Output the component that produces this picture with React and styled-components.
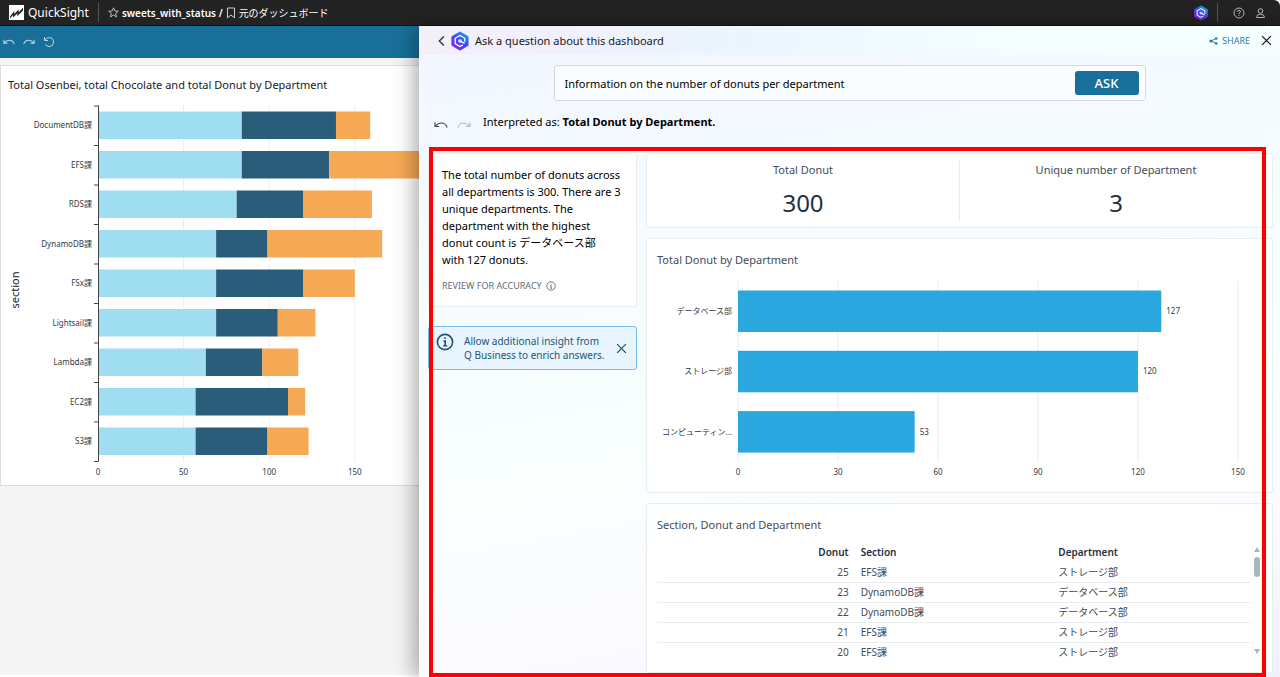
import React from 'react';
import styled, { createGlobalStyle } from 'styled-components';

const GlobalStyle = createGlobalStyle`
  * {
    box-sizing: border-box;
  }

  body {
    margin: 0;
    background: #fff;
    color: #16191f;
    font-family: 'Noto Sans', 'Noto Sans CJK JP', sans-serif;
    font-size: 11px;
  }

  h1, h2, p {
    margin: 0;
    font-size: 11px;
    font-weight: 400;
  }

  button, input {
    font-family: inherit;
  }
`;

const Page = styled.div`
  display: flex;
  flex-direction: column;
  height: 100vh;
`;

/* Top bar */

const TopBar = styled.header`
  display: flex;
  align-items: center;
  flex-shrink: 0;
  height: 26px;
  padding: 0 14px 0 8px;
  background: #232323;
  border-bottom: 1px solid #111;
  border-top-right-radius: 6px;
  color: #fff;
`;

const Brand = styled.a`
  display: flex;
  align-items: center;
  gap: 4px;
  color: #fff;
  font-size: 12px;
  text-decoration: none;
`;

const BarDivider = styled.span`
  width: 1px;
  height: 19px;
  margin: 0 ${({ $gap }) => $gap}px;
  background: #555;
`;

const Crumbs = styled.nav`
  display: flex;
  align-items: center;
  flex: 1;
  gap: 3px;
  font-size: 10px;
`;

const CrumbName = styled.span`
  font-weight: ${({ $bold }) => ($bold ? 600 : 400)};
`;

const IconButton = styled.button`
  display: flex;
  align-items: center;
  justify-content: center;
  flex-shrink: 0;
  padding: 0;
  border: 0;
  background: none;
  color: ${({ $color }) => $color || 'inherit'};
  cursor: pointer;
`;

const TopActions = styled.div`
  display: flex;
  align-items: center;
  gap: 10px;
  padding-left: 7px;
`;

/* Dashboard behind the panel */

const Body = styled.div`
  display: grid;
  grid-template-columns: minmax(0, 419fr) minmax(0, 861fr);
  flex: 1;
  min-height: 0;
`;

const Dashboard = styled.main`
  overflow: hidden;
  margin-bottom: 2px;
  background: #f4f4f4;
`;

const DashboardToolbar = styled.div`
  display: flex;
  align-items: center;
  gap: 8px;
  height: 32px;
  padding: 0 3px;
  background: #18709a;
  color: #b9d8e6;
`;

const Sheet = styled.section`
  width: 640px;
  height: 421px;
  margin-top: 7px;
  padding: 11px 7px;
  border: 1px solid #dedede;
  background: #fff;
`;

const ChartTitle = styled.h2`
  color: ${({ $color }) => $color || '#16191f'};
  line-height: 16px;
`;

const ChartSvg = styled.svg`
  display: block;
  overflow: visible;

  text {
    font-size: 8px;
    fill: #2f3b48;
  }
`;

const AxisTitle = styled.text`
  && {
    font-size: 11px;
    fill: #16191f;
  }
`;

/* Q&A panel */

const Panel = styled.aside`
  position: relative;
  display: flex;
  flex-direction: column;
  min-height: 0;
  background: linear-gradient(170deg, #f2f6ff 0%, #f5fbff 28%, #fafffe 60%, #fbfbff 80%, #f2f1ff 100%);
  box-shadow: -4px 0 20px rgba(0, 0, 0, 0.35);
`;

const PanelHeader = styled.header`
  display: flex;
  align-items: center;
  height: 29px;
  flex-shrink: 0;
  padding: 0 8px 0 18px;
  background: linear-gradient(90deg, #f3eff9 0%, #f3effe 12%, #eaf6ff 38%, #f6ffff 70%);
`;

const PanelBrand = styled.div`
  display: flex;
  align-items: center;
  gap: 4px;
`;

const PanelTitle = styled.h1`
  flex: 1;
  margin-left: 5px;
`;

const ShareButton = styled.button`
  display: flex;
  align-items: center;
  gap: 4px;
  margin-right: 11px;
  padding: 0;
  border: 0;
  background: none;
  color: #2b7aa8;
  font-size: 9px;
  cursor: pointer;
`;

const AskForm = styled.form`
  display: flex;
  align-items: center;
  width: 592px;
  max-width: 90%;
  height: 36px;
  flex-shrink: 0;
  margin: 10px auto 0;
  padding: 0 6px 0 10px;
  border: 1px solid #d5dbdb;
  border-radius: 3px;
  background: #fafdff;
`;

const AskInput = styled.input`
  flex: 1;
  min-width: 0;
  padding: 0;
  border: 0;
  outline: 0;
  background: none;
  color: #000;
  font-size: 11px;
`;

const AskButton = styled.button`
  width: 64px;
  height: 24px;
  padding: 0;
  border: 0;
  border-radius: 3px;
  background: #18709a;
  color: #fff;
  font-size: 13px;
  font-weight: 500;
  cursor: pointer;
`;

const Interpretation = styled.div`
  display: flex;
  align-items: center;
  flex-shrink: 0;
  gap: 12px;
  height: 46px;
  padding: 0 15px 6px;
  color: #000;
`;

const History = styled.div`
  display: flex;
  gap: 9px;
  padding-top: 7px;
`;

const Results = styled.div`
  position: relative;
  display: grid;
  grid-template-columns: 209px minmax(0, 1fr);
  align-items: start;
  gap: 9px;
  flex: 1;
  min-height: 0;
  padding: 6px 7px 3px 9px;
`;

const Highlight = styled.div`
  position: absolute;
  top: 0;
  right: 14px;
  bottom: 0;
  left: 10px;
  border: 4px solid #f00;
  pointer-events: none;
`;

const Column = styled.div`
  display: flex;
  flex-direction: column;
  gap: ${({ $gap }) => $gap}px;
`;

const Card = styled.section`
  border: 1px solid #eaeded;
  border-radius: 3px;
  background: #fff;
`;

const SummaryCard = styled(Card)`
  height: 154px;
  padding: 12px 14px 0 13px;
`;

const SummaryText = styled.p`
  color: #000;
  line-height: 17px;
`;

const Review = styled.div`
  display: flex;
  align-items: center;
  gap: 4px;
  margin-top: 12px;
  color: #5f6b7a;
  font-size: 9px;
  line-height: 12px;
`;

const Notice = styled.div`
  display: flex;
  align-items: center;
  height: 44px;
  padding: 0 9px;
  border: 1px solid #75bdf5;
  border-radius: 3px;
  background: #e9f5fe;
  color: #1f5673;
`;

const NoticeIcon = styled.span`
  display: flex;
  align-self: flex-start;
  margin: 6px 10px 0 -2px;
`;

const NoticeText = styled.p`
  flex: 1;
  font-size: 10px;
  line-height: 14px;
`;

const KpiCard = styled(Card)`
  display: flex;
  height: 75px;
  padding: 6px 0;
`;

const Kpi = styled.div`
  flex: 1;
  text-align: center;

  & + & {
    border-left: 1px solid #eaeded;
  }
`;

const KpiLabel = styled.h2`
  color: #414d5c;
  line-height: 20px;
`;

const KpiValue = styled.p`
  margin-top: 7px;
  color: #232f3e;
  font-size: 24px;
  line-height: 32px;
`;

const ChartCard = styled(Card)`
  height: 255px;
  padding: 13px 10px;
`;

const TableCard = styled(Card)`
  height: 170px;
  padding: 13px 11px 0 10px;
`;

const TableArea = styled.div`
  display: grid;
  grid-template-columns: minmax(0, 1fr) 8px;
  gap: 3px;
  margin-top: 9px;
`;

const Table = styled.table`
  width: 100%;
  border-collapse: collapse;
  table-layout: fixed;
  color: #414d5c;
  font-size: 10px;
  line-height: 16px;

  th, td {
    height: 20px;
    padding: 0 6px;
    text-align: left;
  }

  th {
    color: #232f3e;
    font-weight: 600;
  }

  th:first-child, td:first-child {
    text-align: right;
  }

  td {
    border-bottom: 1px solid #eaeded;
  }

  tr:last-child td {
    border-bottom: 0;
  }
`;

const Scrollbar = styled.div`
  display: flex;
  flex-direction: column;
  align-items: center;
  padding: 5px 0 8px;
  color: #aab7b8;
`;

const ScrollThumb = styled.span`
  width: 6px;
  height: 20px;
  margin: 5px 0 auto;
  border-radius: 3px;
  background: #aab7b8;
`;

/* Icons */

const BrandLogo = () => (
  <svg width="16" height="16" viewBox="0 0 16 16" aria-hidden="true">
    <rect x="1" y="0" width="15" height="15" fill="#fff" />
    <path d="M2 11.4 L6.2 6 V9 L10.6 4.4 V7.4 L15 2.6 V5.6 L9.4 11.2 V8.4 L5 12.6 V10 L2 13.4 Z" fill="#232323" />
  </svg>
);

const StarIcon = () => (
  <svg width="11" height="11" viewBox="0 0 12 12" fill="none" stroke="#ccc" aria-hidden="true">
    <path d="M6 .9 L7.5 4.3 L11.2 4.6 L8.4 7 L9.3 10.8 L6 8.7 L2.7 10.8 L3.6 7 L.8 4.6 L4.5 4.3 Z" />
  </svg>
);

const BookmarkIcon = () => (
  <svg width="10" height="12" viewBox="0 0 10 12" fill="none" stroke="#ccc" aria-hidden="true">
    <path d="M1.5 1 H8.5 V10.8 L5 8 L1.5 10.8 Z" />
  </svg>
);

const QIcon = ({ size, id }) => (
  <svg width={size} height={size} viewBox="0 0 20 20" fill="none" aria-hidden="true">
    <defs>
      <linearGradient id={id} x1="16" y1="2" x2="4" y2="18" gradientUnits="userSpaceOnUse">
        <stop offset="0" stopColor="#12a0ff" />
        <stop offset=".45" stopColor="#3d4cf2" />
        <stop offset="1" stopColor="#8a22e8" />
      </linearGradient>
    </defs>
    <path
      d="M10 .5 L17.9 5 Q18.6 5.4 18.6 6.2 V13.8 Q18.6 14.6 17.9 15 L10.7 19.2 Q10 19.6 9.3 19.2 L2.1 15 Q1.4 14.6 1.4 13.8 V6.2 Q1.4 5.4 2.1 5 Z"
      fill={`url(#${id})`}
    />
    <path
      d="M14.8 10.8 V7.3 L10 4.5 L5.2 7.3 V12.7 L10 15.5 L12.8 13.9"
      stroke="#fff"
      strokeWidth="1.3"
    />
    <path d="M10 8 L11.8 9 V11 L10 12 L8.2 11 V9 Z" fill="#fff" fillOpacity=".75" />
    <path d="M10.4 10.2 L14.6 12.4" stroke="#fff" strokeWidth="1.4" />
  </svg>
);

const HelpIcon = () => (
  <svg width="12" height="12" viewBox="0 0 12 12" fill="none" stroke="#bbb" aria-hidden="true">
    <circle cx="6" cy="6" r="5" />
    <path d="M4.5 4.8 Q4.5 3.4 6 3.4 Q7.5 3.4 7.5 4.7 Q7.5 5.5 6 6.2 V7.2 M6 8 V9" />
  </svg>
);

const UserIcon = () => (
  <svg width="11" height="12" viewBox="0 0 11 12" fill="none" stroke="#bbb" aria-hidden="true">
    <circle cx="5.5" cy="4" r="2.3" />
    <path d="M1.5 10.5 Q1.5 7.2 5.5 7.2 Q9.5 7.2 9.5 10.5 Z" />
  </svg>
);

const UndoIcon = ({ flip, width = 13 }) => (
  <svg width={width} height="8" viewBox="0 0 14 8" fill="none" stroke="currentColor" strokeWidth="1.2" aria-hidden="true">
    <path
      d="M1 1.5 V5.5 H5.2 M1.2 5.3 Q4 2 7.5 2 Q11.5 2 13.2 6.5"
      transform={flip ? 'translate(14 0) scale(-1 1)' : undefined}
    />
  </svg>
);

const ResetIcon = () => (
  <svg width="12" height="12" viewBox="0 0 12 12" fill="none" stroke="currentColor" aria-hidden="true">
    <path d="M1.5 1 V4.5 H5 M1.7 4.3 Q3.5 1.6 6.3 1.6 Q10.6 2 10.6 6.2 Q10.3 10.4 6.2 10.6 Q3.4 10.5 2.2 8.2" />
  </svg>
);

const BackIcon = () => (
  <svg width="9" height="12" viewBox="0 0 9 12" fill="none" stroke="#232f3e" strokeWidth="1.3" aria-hidden="true">
    <path d="M6.8 1.5 L2.3 6 L6.8 10.5" />
  </svg>
);

const CloseIcon = ({ size }) => (
  <svg width={size} height={size} viewBox="0 0 10 10" fill="none" stroke="currentColor" strokeWidth="1.2" aria-hidden="true">
    <path d="M1 1 L9 9 M9 1 L1 9" />
  </svg>
);

const ShareIcon = () => (
  <svg width="9" height="8" viewBox="0 0 9 8" aria-hidden="true">
    <path d="M7.2 1.5 L2 4 L7.2 6.5" fill="none" stroke="#2b7aa8" />
    <circle cx="1.8" cy="4" r="1.5" fill="#2b7aa8" />
    <circle cx="7.2" cy="1.5" r="1.3" fill="#2b7aa8" />
    <circle cx="7.2" cy="6.5" r="1.3" fill="#2b7aa8" />
  </svg>
);

const InfoIcon = ({ size, weight }) => (
  <svg width={size} height={size} viewBox="0 0 18 18" fill="none" stroke="currentColor" strokeWidth={weight} aria-hidden="true">
    <circle cx="9" cy="9" r="7.6" />
    <path d="M7.4 8 H9.2 V13 M7.2 12.8 H11.2 M9 4.2 V6" />
  </svg>
);

const ScrollArrow = ({ down }) => (
  <svg width="6" height="5" viewBox="0 0 6 5" fill="currentColor" aria-hidden="true">
    <path d={down ? 'M0 0 H6 L3 5 Z' : 'M0 5 H6 L3 0 Z'} />
  </svg>
);

/* Data */

const sections = [
  { name: 'DocumentDB課', values: [84, 55, 20] },
  { name: 'EFS課', values: [84, 51, 110] },
  { name: 'RDS課', values: [81, 39, 40] },
  { name: 'DynamoDB課', values: [69, 30, 67] },
  { name: 'FSx課', values: [69, 51, 30] },
  { name: 'Lightsail課', values: [69, 36, 22] },
  { name: 'Lambda課', values: [63, 33, 21] },
  { name: 'EC2課', values: [57, 54, 10] },
  { name: 'S3課', values: [57, 42, 24] },
];

const departments = [
  { name: 'データベース部', value: 127 },
  { name: 'ストレージ部', value: 120 },
  { name: 'コンピューティン...', value: 53 },
];

const rows = [
  [25, 'EFS課', 'ストレージ部'],
  [23, 'DynamoDB課', 'データベース部'],
  [22, 'DynamoDB課', 'データベース部'],
  [21, 'EFS課', 'ストレージ部'],
  [20, 'EFS課', 'ストレージ部'],
];

const seriesColors = ['#9fdef1', '#295d79', '#f6a955'];

/* Charts */

const SectionChart = () => {
  const left = 90;
  const top = 13;
  const step = 39.5;
  const unit = 1.712;
  const bottom = top + step * sections.length;

  return (
    <ChartSvg width="620" height="384" role="img" aria-label="Totals by section">
      {[50, 100, 150].map((tick) => (
        <line key={tick} x1={left + tick * unit} x2={left + tick * unit} y1={top} y2={bottom} stroke="#eee" />
      ))}
      {sections.map(({ name, values }, row) => {
        const y = top + row * step;
        let total = 0;
        return (
          <g key={name}>
            {values.map((value, i) => {
              const x = left + total * unit;
              total += value;
              return <rect key={i} x={x} y={y + 5.5} width={value * unit} height="27.5" fill={seriesColors[i]} />;
            })}
            <text x={left - 6} y={y + 22} textAnchor="end">{name}</text>
            <line x1={left - 4} x2={left} y1={y} y2={y} stroke="#444" />
          </g>
        );
      })}
      <path d={`M${left - 4} ${bottom} H${left + 0.5} V${top - 0.5}`} fill="none" stroke="#444" />
      {[0, 50, 100, 150].map((tick) => (
        <text key={tick} x={left + tick * unit} y={bottom + 13} textAnchor="middle">{tick}</text>
      ))}
      <AxisTitle transform={`translate(11 ${top + 184}) rotate(-90)`} textAnchor="middle">section</AxisTitle>
    </ChartSvg>
  );
};

const DepartmentChart = () => {
  const left = 81;
  const top = 13;
  const step = 60.3;
  const unit = 3.333;
  const bottom = top + step * departments.length;

  return (
    <ChartSvg width="605" height="212" role="img" aria-label="Total donut by department">
      {[0, 30, 60, 90, 120, 150].map((tick) => (
        <g key={tick}>
          <line x1={left + tick * unit} x2={left + tick * unit} y1={top} y2={bottom} stroke="#eaeded" />
          <text x={left + tick * unit} y={bottom + 13} textAnchor="middle">{tick}</text>
        </g>
      ))}
      {departments.map(({ name, value }, row) => {
        const y = top + row * step;
        return (
          <g key={name}>
            <rect x={left} y={y + 9.5} width={value * unit} height="41.5" fill="#2ba7df" />
            <text x={left - 6} y={y + 33} textAnchor="end">{name}</text>
            <text x={left + value * unit + 5} y={y + 33}>{value}</text>
          </g>
        );
      })}
    </ChartSvg>
  );
};

const App = () => {
  return (
    <Page>
      <GlobalStyle />
      <TopBar>
        <Brand href="#">
          <BrandLogo />
          QuickSight
        </Brand>
        <BarDivider $gap={9} />
        <Crumbs>
          <StarIcon />
          <CrumbName $bold>sweets_with_status /</CrumbName>
          <BookmarkIcon />
          <CrumbName>元のダッシュボード</CrumbName>
        </Crumbs>
        <IconButton aria-label="Open Q"><QIcon size={16} id="q-top" /></IconButton>
        <BarDivider $gap={8} />
        <TopActions>
          <IconButton aria-label="Help"><HelpIcon /></IconButton>
          <IconButton aria-label="Account"><UserIcon /></IconButton>
        </TopActions>
      </TopBar>

      <Body>
        <Dashboard>
          <DashboardToolbar>
            <IconButton aria-label="Undo"><UndoIcon width={12} /></IconButton>
            <IconButton aria-label="Redo"><UndoIcon width={12} flip /></IconButton>
            <IconButton aria-label="Reset"><ResetIcon /></IconButton>
          </DashboardToolbar>
          <Sheet>
            <ChartTitle>Total Osenbei, total Chocolate and total Donut by Department</ChartTitle>
            <SectionChart />
          </Sheet>
        </Dashboard>

        <Panel>
          <PanelHeader>
            <PanelBrand>
              <IconButton aria-label="Back"><BackIcon /></IconButton>
              <QIcon size={20} id="q-panel" />
            </PanelBrand>
            <PanelTitle>Ask a question about this dashboard</PanelTitle>
            <ShareButton>
              <ShareIcon />
              SHARE
            </ShareButton>
            <IconButton aria-label="Close panel"><CloseIcon size={11} /></IconButton>
          </PanelHeader>

          <AskForm onSubmit={(e) => e.preventDefault()}>
            <AskInput aria-label="Question" defaultValue="Information on the number of donuts per department" />
            <AskButton type="submit">ASK</AskButton>
          </AskForm>

          <Interpretation>
            <History>
              <IconButton aria-label="Undo question" $color="#414d5c"><UndoIcon width={14} /></IconButton>
              <IconButton aria-label="Redo question" $color="#b6bec9"><UndoIcon width={14} flip /></IconButton>
            </History>
            <p>
              Interpreted as: <b>Total Donut by Department.</b>
            </p>
          </Interpretation>

          <Results>
            <Column $gap={19}>
              <SummaryCard>
                <SummaryText>
                  The total number of donuts across all departments is 300. There are 3 unique departments. The
                  department with the highest donut count is データベース部 with&nbsp;127&nbsp;donuts.
                </SummaryText>
                <Review>
                  REVIEW FOR ACCURACY
                  <InfoIcon size={10} weight={1.6} />
                </Review>
              </SummaryCard>
              <Notice>
                <NoticeIcon><InfoIcon size={18} weight={1.6} /></NoticeIcon>
                <NoticeText>Allow additional insight from Q&nbsp;Business to enrich answers.</NoticeText>
                <IconButton aria-label="Dismiss"><CloseIcon size={11} /></IconButton>
              </Notice>
            </Column>

            <Column $gap={10}>
              <KpiCard>
                <Kpi>
                  <KpiLabel>Total Donut</KpiLabel>
                  <KpiValue>300</KpiValue>
                </Kpi>
                <Kpi>
                  <KpiLabel>Unique number of Department</KpiLabel>
                  <KpiValue>3</KpiValue>
                </Kpi>
              </KpiCard>
              <ChartCard>
                <ChartTitle $color="#414d5c">Total Donut by Department</ChartTitle>
                <DepartmentChart />
              </ChartCard>
              <TableCard>
                <ChartTitle $color="#414d5c">Section, Donut and Department</ChartTitle>
                <TableArea>
                  <Table>
                    <thead>
                      <tr>
                        <th>Donut</th>
                        <th>Section</th>
                        <th>Department</th>
                      </tr>
                    </thead>
                    <tbody>
                      {rows.map(([donut, section, department]) => (
                        <tr key={donut}>
                          <td>{donut}</td>
                          <td>{section}</td>
                          <td>{department}</td>
                        </tr>
                      ))}
                    </tbody>
                  </Table>
                  <Scrollbar>
                    <ScrollArrow />
                    <ScrollThumb />
                    <ScrollArrow down />
                  </Scrollbar>
                </TableArea>
              </TableCard>
            </Column>
            <Highlight />
          </Results>
        </Panel>
      </Body>
    </Page>
  );
};

export default App;
